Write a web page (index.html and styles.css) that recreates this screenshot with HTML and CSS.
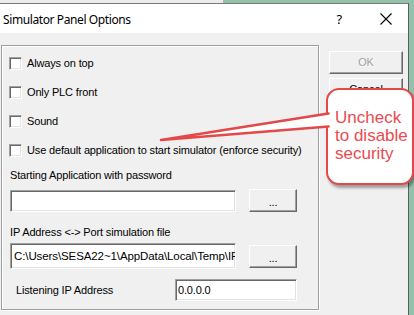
FILE: index.html
```html
<!DOCTYPE html>
<html lang="en"><head>
<meta charset="utf-8">
<title>Simulator Panel Options</title>
<link rel="stylesheet" href="styles.css">
</head>
<body>
<div class="strip"></div>
<div class="window">
  <div class="titlebar">
    <span class="title">Simulator Panel Options</span>
    <span class="help">?</span>
    <svg class="close" width="12" height="12" viewBox="0 0 12 12"><path d="M0.5 0.5 L11.5 11.5 M11.5 0.5 L0.5 11.5" stroke="#000" stroke-width="1.1" fill="none"/></svg>
  </div>
  <div class="client">
    <div class="group">
      <div class="check"><span class="box"></span>Always on top</div>
      <div class="check"><span class="box"></span>Only PLC front</div>
      <div class="check"><span class="box"></span>Sound</div>
      <div class="check"><span class="box"></span>Use default application to start simulator (enforce security)</div>

      <div class="label lbl1">Starting Application with password</div>
      <div class="line">
        <div class="field wide"></div>
        <div class="btn browse">...</div>
      </div>

      <div class="label lbl2">IP Address &lt;-&gt; Port simulation file</div>
      <div class="line">
        <div class="field wide tall">C:\Users\SESA22~1\AppData\Local\Temp\IP</div>
        <div class="btn browse">...</div>
      </div>

      <div class="line ipline">
        <span class="iplabel">Listening IP Address</span>
        <div class="field ip">0.0.0.0</div>
      </div>
    </div>
    <div class="buttons">
      <div class="btn side disabled">OK</div>
      <div class="btn side">Cancel</div>
    </div>
  </div>
</div>

<div class="callout">Uncheck<br>to disable<br>security</div>
<svg class="pointer" width="414" height="315" viewBox="0 0 414 315">
  <polygon points="161,140 330,113 330,127" fill="#fff"/>
  <path d="M161 140 L328.5 113.5 M161 140 L328.5 126.5" stroke="#e54848" stroke-width="2.6" fill="none" stroke-linecap="round"/>
</svg>
</body></html>
```
FILE: styles.css
```css
body{ margin:0; width:414px; height:315px; overflow:hidden; background:#92c3aa; font-family:"Liberation Sans", Arial, sans-serif; font-size:11px; letter-spacing:-0.15px; color:#000; }
.strip{ width:223px; height:3px; background:#ececec; }
.window{ width:408px; height:312px; border-top:1px solid #7a7a7a; border-right:1px solid #5d5d5d; background:#f0f0f0; }

.titlebar{ height:29px; background:#fff; display:flex; align-items:center; }
.title{ font-family:"Noto Sans", sans-serif; font-size:12px; letter-spacing:-0.4px; margin-left:3px; flex:1; padding-top:1px; }
.help{ font-family:"Noto Sans", sans-serif; font-size:13px; margin-right:38px; }
.close{ margin-right:16px; }

.client{ display:flex; align-items:flex-start; padding-top:12px; }
.group{ margin-left:1px; width:316px; height:252px; border:1px solid #a0a0a0; box-shadow:inset 1px 1px 0 #fff, 1px 1px 0 #fff; padding-top:11px; }

.check{ display:flex; align-items:center; height:13px; line-height:13px; margin-left:7px; margin-bottom:16px; }
.box{ width:11px; height:11px; border:1px solid; border-color:#a0a0a0 #fff #fff #a0a0a0; box-shadow:inset 1px 1px 0 #696969, inset -1px -1px 0 #e3e3e3; background:#fff; margin-right:5px; flex:none; }
.check:nth-child(4){ margin-bottom:12px; }

.label{ margin-left:8px; line-height:13px; height:13px; }
.lbl1{ margin-bottom:7px; }
.lbl2{ margin-top:14px; margin-bottom:4px; }

.line{ display:flex; align-items:center; margin-left:8px; }
.field{ height:20px; border:1px solid; border-color:#a0a0a0 #fff #fff #a0a0a0; box-shadow:inset 1px 1px 0 #696969, inset -1px -1px 0 #e3e3e3; background:#fff; padding:0 3px; line-height:20px; overflow:hidden; white-space:nowrap; }
.field.wide{ width:218px; }
.field.tall{ height:24px; line-height:24px; font-size:11.5px; letter-spacing:-0.1px; }
.field.ip{ width:116px; margin-left:auto; margin-right:21px; padding:0 2px; }
.ipline{ margin-top:10px; margin-left:14px; }

.btn{ box-sizing:border-box; height:23px; border:1px solid; border-color:#fff #696969 #696969 #fff; box-shadow:inset -1px -1px 0 #a0a0a0; background:#f0f0f0; text-align:center; line-height:21px; }
.browse{ width:48px; margin-left:13px; line-height:24px; }

.buttons{ margin-left:10px; margin-top:6px; display:flex; flex-direction:column; gap:4px; }
.side{ width:74px; }
.disabled{ color:#a0a0a0; text-shadow:1px 1px 0 #fff; }

.callout{ position:absolute; left:326px; top:88px; width:88px; height:97px; box-sizing:border-box; border:2.5px solid #e54848; border-radius:13px; background:#fff; box-shadow:2px 3px 3px rgba(0,0,0,0.35); color:#ea4b4f; font-size:17px; line-height:18px; letter-spacing:0; padding:19px 0 0 7px; }
.pointer{ position:absolute; left:0; top:0; }
```
